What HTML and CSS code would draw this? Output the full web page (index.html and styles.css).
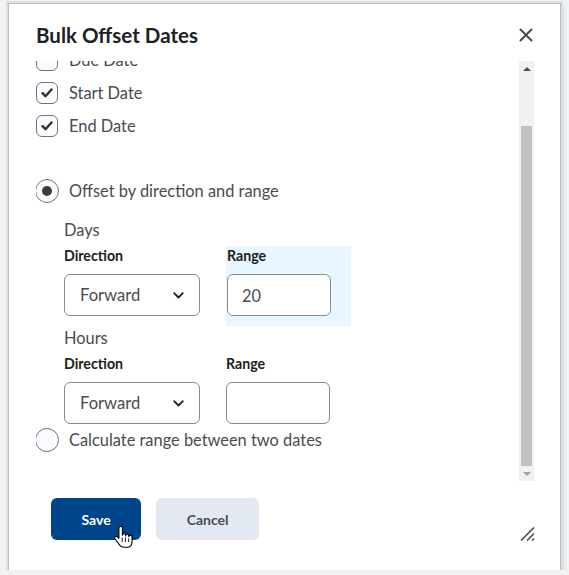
FILE: index.html
```html
<!DOCTYPE html>
<html lang="en">
<head>
  <meta charset="UTF-8">
  <meta name="viewport" content="width=device-width, initial-scale=1.0">
  <title>Bulk Offset Dates</title>
  <link rel="stylesheet" href="styles.css">
</head>
<body>
  <div class="dialog" role="dialog" aria-labelledby="dialogTitle">
    <header class="dialog-header">
      <h2 class="dialog-title" id="dialogTitle">Bulk Offset Dates</h2>
      <button class="close-btn" aria-label="Close">
        <svg width="14" height="14" viewBox="0 0 14 14"><path d="M1.5 1.5l11 11M12.5 1.5l-11 11" stroke="#494c4e" stroke-width="2" stroke-linecap="round"/></svg>
      </button>
    </header>

    <div class="body-wrap">
      <div class="dialog-body" id="dialogBody">
        <!-- 오프셋할 날짜 선택 -->
        <div class="date-group">
          <label class="check-row">
            <span class="checkbox"></span>Due Date
          </label>
          <label class="check-row">
            <span class="checkbox"><svg width="12" height="10" viewBox="0 0 12 10"><path d="M1.5 5.2l3 3 6-6.7" fill="none" stroke="#303335" stroke-width="2.4" stroke-linecap="round" stroke-linejoin="round"/></svg></span>Start Date
          </label>
          <label class="check-row">
            <span class="checkbox"><svg width="12" height="10" viewBox="0 0 12 10"><path d="M1.5 5.2l3 3 6-6.7" fill="none" stroke="#303335" stroke-width="2.4" stroke-linecap="round" stroke-linejoin="round"/></svg></span>End Date
          </label>
        </div>

        <!-- 방향과 범위로 오프셋 -->
        <label class="radio-row">
          <span class="radio checked"></span>Offset by direction and range
        </label>
        <div class="offset-options">
          <div class="unit">Days</div>
          <div class="field-row">
            <div class="field">
              <div class="field-label">Direction</div>
              <button class="select">Forward
                <svg width="11" height="7" viewBox="0 0 11 7"><path d="M1.2 1.2l4.3 4.3 4.3-4.3" fill="none" stroke="#202122" stroke-width="1.8" stroke-linecap="round" stroke-linejoin="round"/></svg>
              </button>
            </div>
            <div class="field highlight">
              <div class="field-label">Range</div>
              <input class="text-input" type="text" value="20">
            </div>
          </div>

          <div class="unit">Hours</div>
          <div class="field-row">
            <div class="field">
              <div class="field-label">Direction</div>
              <button class="select">Forward
                <svg width="11" height="7" viewBox="0 0 11 7"><path d="M1.2 1.2l4.3 4.3 4.3-4.3" fill="none" stroke="#202122" stroke-width="1.8" stroke-linecap="round" stroke-linejoin="round"/></svg>
              </button>
            </div>
            <div class="field">
              <div class="field-label">Range</div>
              <input class="text-input" type="text" value="">
            </div>
          </div>
        </div>

        <label class="radio-row">
          <span class="radio"></span>Calculate range between two dates
        </label>
      </div>

      <!-- 스크롤바 -->
      <div class="scrollbar">
        <div class="scroll-btn up"></div>
        <div class="scroll-track" id="scrollTrack">
          <div class="scroll-thumb" id="scrollThumb"></div>
        </div>
        <div class="scroll-btn down"></div>
      </div>
    </div>

    <footer class="dialog-footer">
      <button class="btn btn-primary">Save</button>
      <button class="btn btn-secondary">Cancel</button>
    </footer>

    <!-- 크기 조절 핸들 -->
    <svg class="resize-grip" width="16" height="14" viewBox="0 0 16 14">
      <path d="M1 13.5L14 0.5M7 13.5l7-7M12 13.5l2-2" stroke="#494c4e" stroke-width="1.6"/>
    </svg>

    <!-- 마우스 커서 -->
    <svg class="cursor" width="20" height="26" viewBox="0 0 20 26">
      <path d="M6.5 1.5c-.9 0-1.6.7-1.6 1.6v10.2l-1.4-1.5c-.7-.7-1.8-.7-2.4 0-.6.6-.6 1.6 0 2.2l4.6 6.2c1 1.3 2.5 2.1 4.1 2.1h3.3c2.7 0 4.9-2.2 4.9-4.9v-5.6c0-.9-.7-1.6-1.6-1.6s-1.6.7-1.6 1.6v-.9c0-.9-.7-1.6-1.6-1.6s-1.6.7-1.6 1.6v-.7c0-.9-.7-1.6-1.6-1.6s-1.6.7-1.6 1.6V3.1c0-.9-.7-1.6-1.5-1.6z" fill="#fff" stroke="#000" stroke-width="1.1" stroke-linejoin="round"/>
      <path d="M11.4 12.5v4.5M14.6 13.4v3.6M8.2 12.5v4.5" stroke="#000" stroke-width="0.9"/>
    </svg>
  </div>

  <script>
    // 목록을 맨 아래까지 스크롤하고 스크롤바 위치 갱신
    const dialogBody = document.getElementById('dialogBody');
    const scrollTrack = document.getElementById('scrollTrack');
    const scrollThumb = document.getElementById('scrollThumb');

    function updateThumb() {
      const trackHeight = scrollTrack.clientHeight;
      const ratio = dialogBody.clientHeight / dialogBody.scrollHeight;
      scrollThumb.style.height = Math.round(trackHeight * ratio) + 'px';
      scrollThumb.style.top = Math.round(trackHeight * dialogBody.scrollTop / dialogBody.scrollHeight) + 'px';
    }

    dialogBody.scrollTop = dialogBody.scrollHeight;
    dialogBody.addEventListener('scroll', updateThumb);
    updateThumb();
  </script>
</body>
</html>
```

FILE: styles.css
```css
/* 페이지 배경 */
body {
  margin: 0;
  background-color: #f1f2f4;
  font-family: Lato, "Noto Sans", sans-serif;
  color: #494c4e;
}

/* 대화상자 */
.dialog {
  position: relative;
  box-sizing: border-box;
  width: 551px;
  height: 566px;
  margin: 4px 0 0 9px;
  background-color: white;
  box-shadow: 0 0 0 1px #b9bec3, 0 0 0 3px #dde0e3, 2px 3px 6px rgba(0, 0, 0, 0.2);
  display: flex;
  flex-direction: column;
}

.dialog-header {
  box-sizing: border-box;
  height: 57px;
  padding: 5px 27px 0;
  display: flex;
  align-items: center;
  justify-content: space-between;
}

.dialog-title {
  margin: 0;
  font-size: 20.5px;
  line-height: 28px;
  font-weight: 700;
  color: #202122;
}

.close-btn {
  background: none;
  border: 0;
  padding: 0;
  width: 14px;
  height: 14px;
  display: flex;
}

/* 스크롤 영역 */
.body-wrap {
  height: 420px;
  margin: 0 26px 0 27px;
  display: flex;
}

.dialog-body {
  flex: 1;
  box-sizing: border-box;
  padding: 50px 0 29px;
  overflow-y: auto;
  scrollbar-width: none;
}

/* 스크롤바 */
.scrollbar {
  width: 15px;
  background-color: #f1f1f1;
  display: flex;
  flex-direction: column;
}

.scroll-btn {
  height: 15px;
  display: flex;
  align-items: center;
  justify-content: center;
}

.scroll-btn::after {
  content: "";
  border-left: 4px solid transparent;
  border-right: 4px solid transparent;
}

.scroll-btn.up::after {
  border-bottom: 4px solid #505050;
}

.scroll-btn.down::after {
  border-top: 4px solid #a3a3a3;
}

.scroll-track {
  flex: 1;
  position: relative;
}

.scroll-thumb {
  position: absolute;
  left: 2px;
  right: 2px;
  background-color: #c1c1c1;
}

.date-group {
  margin-bottom: 42px;
}

/* 체크박스 */
.check-row {
  display: flex;
  align-items: center;
  gap: 11px;
  height: 22px;
  margin-bottom: 11px;
  font-size: 16.4px;
  line-height: 24px;
}

.checkbox {
  box-sizing: border-box;
  width: 22px;
  height: 22px;
  border: 1px solid #6e7477;
  border-radius: 6px;
  background-color: #f9fbff;
  display: flex;
  align-items: center;
  justify-content: center;
}

/* 라디오 버튼 */
.radio-row {
  display: flex;
  align-items: center;
  gap: 10px;
  height: 24px;
  font-size: 16.4px;
  line-height: 24px;
  margin-left: -1px;
}

.radio {
  box-sizing: border-box;
  width: 24px;
  height: 24px;
  border: 1px solid #6e7477;
  border-radius: 50%;
  background-color: #f9fbff;
  display: flex;
  align-items: center;
  justify-content: center;
}

.radio.checked::after {
  content: "";
  width: 10px;
  height: 10px;
  border-radius: 50%;
  background-color: #3a3d3f;
}

/* 일/시간 옵션 */
.offset-options {
  padding-left: 28px;
  margin-top: 15px;
}

.unit {
  font-size: 16.4px;
  line-height: 24px;
  margin-bottom: 4px;
}

.field-row {
  display: flex;
  gap: 26px;
  align-items: flex-start;
  margin-bottom: 10px;
}

.field-row:last-child {
  margin-bottom: 4px;
}

.field-label {
  font-size: 14.2px;
  font-weight: 700;
  line-height: 20px;
  color: #202122;
  margin-bottom: 8px;
}

.highlight {
  background-color: #e8f6ff;
  padding: 0 20px 10px 1px;
  margin-bottom: -10px;
}

.select {
  box-sizing: border-box;
  width: 136px;
  height: 42px;
  padding: 0 15px;
  border: 1px solid #868c8f;
  border-radius: 6px;
  background-color: white;
  font-family: inherit;
  font-size: 16.6px;
  color: #494c4e;
  display: flex;
  align-items: center;
  justify-content: space-between;
}

.text-input {
  box-sizing: border-box;
  width: 104px;
  height: 42px;
  padding: 0 14px;
  border: 1px solid #868c8f;
  border-radius: 6px;
  background-color: white;
  font-family: inherit;
  font-size: 16.4px;
  color: #494c4e;
  display: block;
}

/* 하단 버튼 */
.dialog-footer {
  padding: 17px 0 0 42px;
  display: flex;
  gap: 15px;
}

.btn {
  height: 42px;
  padding: 0 30.5px;
  border: 0;
  border-radius: 6px;
  font-family: inherit;
  font-size: 14px;
  font-weight: 700;
}

.btn-primary {
  background-color: #004489;
  color: white;
}

.btn-secondary {
  background-color: #e3e9f1;
  color: #494c4e;
}

.resize-grip {
  position: absolute;
  right: 24px;
  bottom: 29px;
}

.cursor {
  position: absolute;
  left: 105px;
  top: 521px;
}
```
